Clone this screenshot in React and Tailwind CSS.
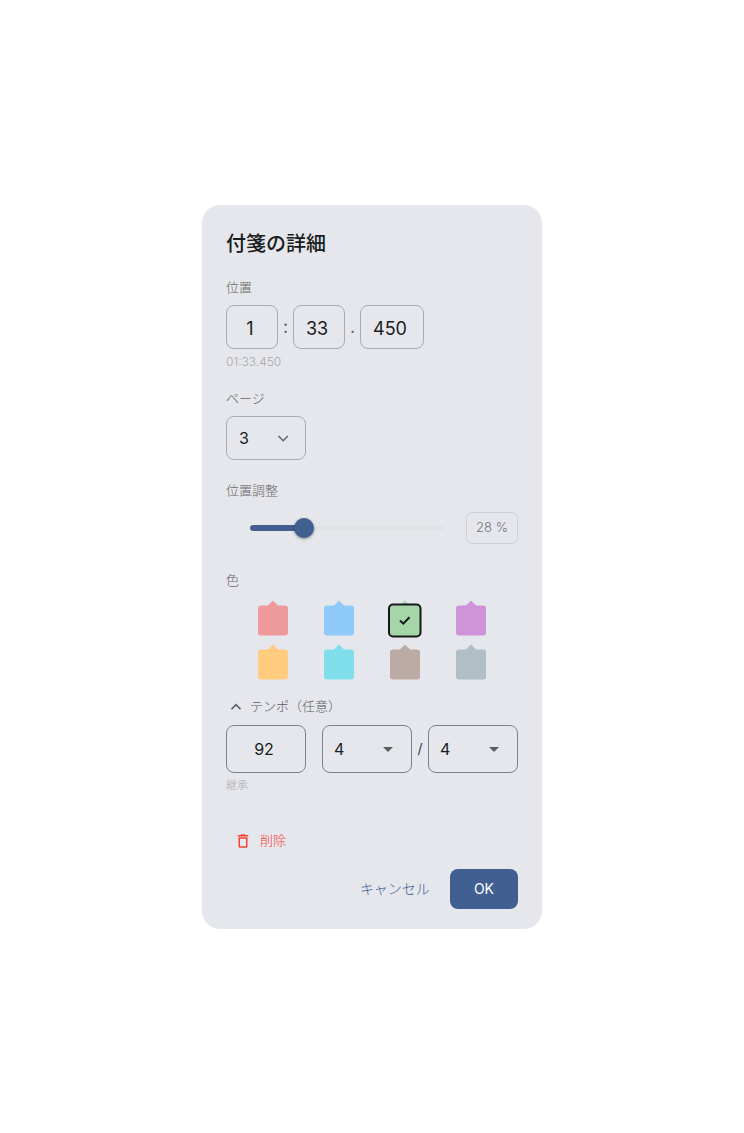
import React, { useState } from 'react'

const colors = [
  { id: 'red', name: '赤', fill: 'text-[#ef9a9a]' },
  { id: 'blue', name: '青', fill: 'text-[#90caf9]' },
  { id: 'green', name: '緑', fill: 'text-[#a5d6a7]' },
  { id: 'purple', name: '紫', fill: 'text-[#ce93d8]' },
  { id: 'orange', name: 'オレンジ', fill: 'text-[#ffcc80]' },
  { id: 'cyan', name: '水色', fill: 'text-[#80deea]' },
  { id: 'brown', name: '茶', fill: 'text-[#bcaaa4]' },
  { id: 'gray', name: 'グレー', fill: 'text-[#b0bec5]' },
]

const TimeInput = ({ label, value, onChange, width }) => (
  <input
    type="text"
    inputMode="numeric"
    aria-label={label}
    value={value}
    onChange={(e) => onChange(e.target.value)}
    className={`${width} h-11 pt-1 pr-1 rounded-lg border border-[#aaabb0] bg-transparent text-center text-lg text-[#191c20] outline-none`}
  />
)

const BeatSelect = ({ label, value, onChange, options }) => (
  <div className="relative flex-1">
    <select
      aria-label={label}
      value={value}
      onChange={(e) => onChange(e.target.value)}
      className="block w-full h-12 pl-[11px] pr-8 appearance-none rounded-lg border border-[#808289] bg-transparent text-base text-[#191c20] outline-none"
    >
      {options.map((n) => (
        <option key={n} value={n}>{n}</option>
      ))}
    </select>
    <svg viewBox="0 0 24 24" className="absolute right-3 top-3 w-6 h-6 pointer-events-none text-[#5c5d61]" fill="currentColor">
      <path d="M7 10l5 5 5-5z" />
    </svg>
  </div>
)

const ColorSwatch = ({ color, checked, onChange }) => (
  <label className="relative flex justify-center h-9 cursor-pointer">
    <input
      type="radio"
      name="color"
      value={color.id}
      aria-label={color.name}
      checked={checked}
      onChange={onChange}
      className="sr-only"
    />
    <svg viewBox="0 0 36 38" className={`w-9 h-[38px] ${color.fill}`}>
      <path d="M12.5 6 18 0.5 23.5 6z" fill="currentColor" />
      {checked ? (
        <>
          <rect x="2" y="4.5" width="31.5" height="32" rx="4" fill="currentColor" stroke="#17191c" strokeWidth="2" />
          <path d="M13 20.5 16.3 23.7 22.5 17.2" fill="none" stroke="#17191c" strokeWidth="2" />
        </>
      ) : (
        <rect x="3" y="5.5" width="30" height="30" rx="3" fill="currentColor" />
      )}
    </svg>
  </label>
)

const App = () => {
  const [minutes, setMinutes] = useState('1')
  const [seconds, setSeconds] = useState('33')
  const [millis, setMillis] = useState('450')
  const [page, setPage] = useState('3')
  const [offset, setOffset] = useState(28)
  const [color, setColor] = useState('green')
  const [tempoOpen, setTempoOpen] = useState(true)
  const [tempo, setTempo] = useState('92')
  const [beats, setBeats] = useState('4')
  const [beatUnit, setBeatUnit] = useState('4')

  return (
    <main className="min-h-screen flex items-center justify-center bg-white font-['Inter','Noto_Sans_CJK_JP',sans-serif]">
      <div role="dialog" aria-labelledby="dialog-title" className="w-full max-w-[340px] px-6 pt-[25px] pb-5 rounded-[18px] bg-[#e6e7ec]">
        <h1 id="dialog-title" className="text-xl leading-7 font-medium text-[#191c20]">付箋の詳細</h1>

        <h2 className="mt-[19px] text-[13px] leading-5 font-light text-[#66676b]">位置</h2>
        <div className="mt-2 flex items-center">
          <TimeInput label="分" value={minutes} onChange={setMinutes} width="w-13" />
          <span className="w-[15px] text-center text-lg leading-6 text-[#5c5d61]">:</span>
          <TimeInput label="秒" value={seconds} onChange={setSeconds} width="w-13" />
          <span className="w-[15px] text-center text-lg leading-6 text-[#5c5d61]">.</span>
          <TimeInput label="ミリ秒" value={millis} onChange={setMillis} width="w-16" />
        </div>
        <p className="mt-[5px] text-xs leading-4 font-light text-[#a6a7ab]">01:33.450</p>

        <label htmlFor="page" className="mt-[18px] block text-[13px] leading-5 font-light text-[#66676b]">ページ</label>
        <div className="relative mt-2 w-20">
          <select
            id="page"
            value={page}
            onChange={(e) => setPage(e.target.value)}
            className="block w-full h-11 pl-3 pr-8 appearance-none rounded-lg border border-[#aaabb0] bg-transparent text-base text-[#191c20] outline-none"
          >
            {['1', '2', '3', '4', '5'].map((n) => (
              <option key={n} value={n}>{n}</option>
            ))}
          </select>
          <svg viewBox="0 0 20 20" className="absolute right-3 top-3 w-5 h-5 pointer-events-none" fill="none" stroke="#66676b" strokeWidth="1.6">
            <path d="M4.5 8 9.2 12.7 13.9 8" />
          </svg>
        </div>

        <label htmlFor="offset" className="mt-5 block text-[13px] leading-5 font-light text-[#66676b]">位置調整</label>
        <div className="mt-3 flex items-center gap-3 pl-3.5">
          <div className="relative flex-1 h-8 flex items-center px-2.5">
            <div className="flex-1 h-1 flex items-center rounded-full bg-[#e1e2e6]">
              <div className="h-1.5 rounded-full bg-[#415f91]" style={{ width: `${offset}%` }}></div>
            </div>
            <input
              id="offset"
              type="range"
              min="0"
              max="100"
              value={offset}
              onChange={(e) => setOffset(Number(e.target.value))}
              className="absolute inset-0 w-full appearance-none bg-transparent cursor-pointer outline-none [&::-webkit-slider-thumb]:appearance-none [&::-webkit-slider-thumb]:w-5 [&::-webkit-slider-thumb]:h-5 [&::-webkit-slider-thumb]:rounded-full [&::-webkit-slider-thumb]:bg-[#415f91] [&::-webkit-slider-thumb]:shadow-[0_1px_3px_rgba(0,0,0,0.4)]"
            />
          </div>
          <output htmlFor="offset" className="w-13 h-8 flex items-center justify-center rounded-md border border-[#cfd0d5] text-[13px] font-light text-[#75767b]">
            {offset} %
          </output>
        </div>

        <fieldset className="mt-[26px]">
          <legend className="text-[13px] leading-5 font-light text-[#66676b]">色</legend>
          <div className="mt-2.5 px-3.5 grid grid-cols-4 gap-y-2">
            {colors.map((c) => (
              <ColorSwatch key={c.id} color={c} checked={color === c.id} onChange={() => setColor(c.id)} />
            ))}
          </div>
        </fieldset>

        <button
          type="button"
          aria-expanded={tempoOpen}
          onClick={() => setTempoOpen(!tempoOpen)}
          className="mt-4 flex items-center text-[13px] leading-5 font-light text-[#5c5d61] cursor-pointer"
        >
          <svg viewBox="0 0 24 20" className={`w-6 h-5 ${tempoOpen ? '' : 'rotate-180'}`} fill="none" stroke="currentColor" strokeWidth="1.6">
            <path d="M5.5 13.2 10 8.7 14.5 13.2" />
          </svg>
          テンポ（任意）
        </button>
        {tempoOpen && (
          <>
            <div className="mt-[9px] flex items-center">
              <input
                type="text"
                inputMode="numeric"
                aria-label="テンポ"
                value={tempo}
                onChange={(e) => setTempo(e.target.value)}
                className="w-20 h-12 mr-4 pr-1 rounded-lg border border-[#808289] bg-transparent text-center text-base text-[#191c20] outline-none"
              />
              <BeatSelect label="拍子の分子" value={beats} onChange={setBeats} options={['2', '3', '4', '5', '6']} />
              <span className="w-4 text-center text-sm text-[#3a3b3f]">/</span>
              <BeatSelect label="拍子の分母" value={beatUnit} onChange={setBeatUnit} options={['2', '4', '8', '16']} />
            </div>
            <p className="mt-1 text-[11px] leading-4 font-light text-[#acadb1]">継承</p>
          </>
        )}

        <button type="button" className="mt-7 h-10 px-2 flex items-center gap-2 text-[13px] font-light text-[#f44336] cursor-pointer">
          <svg viewBox="0 0 24 24" className="w-[18px] h-[18px]" fill="currentColor">
            <path d="M6 19c0 1.1.9 2 2 2h8c1.1 0 2-.9 2-2V7H6v12zM8 9h8v10H8V9zm7.5-5l-1-1h-5l-1 1H5v2h14V4h-3.5z" />
          </svg>
          削除
        </button>
        <div className="mt-2 flex items-center justify-end gap-2">
          <button type="button" className="h-10 px-3 text-sm font-light text-[#415f91] cursor-pointer">キャンセル</button>
          <button type="button" className="h-10 px-6 rounded-lg bg-[#415f91] text-sm text-white cursor-pointer">OK</button>
        </div>
      </div>
    </main>
  )
}

export default App;
